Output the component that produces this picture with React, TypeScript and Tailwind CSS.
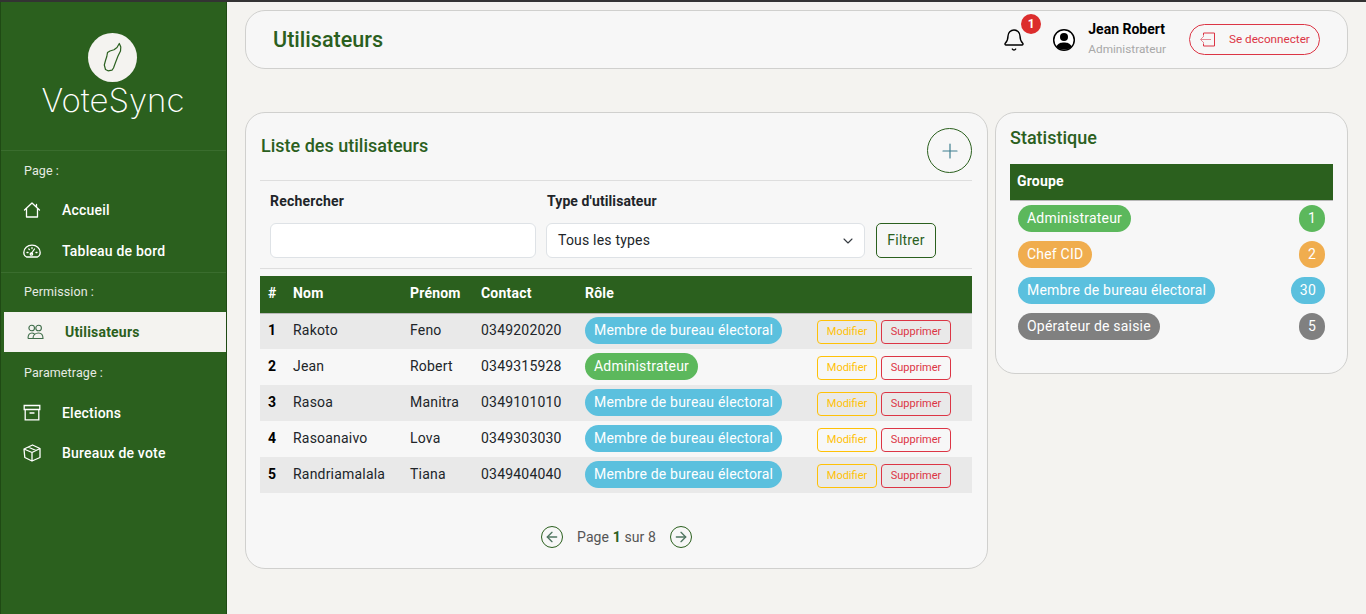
import React from "react";
import { Bell, Plus, ChevronDown, ArrowLeft, ArrowRight } from "lucide-react";

const BLUE = "bg-[#5bc0de]";
const rows = [
  ["1", "Rakoto", "Feno", "0349202020", "m"],
  ["2", "Jean", "Robert", "0349315928", "a"],
  ["3", "Rasoa", "Manitra", "0349101010", "m"],
  ["4", "Rasoanaivo", "Lova", "0349303030", "m"],
  ["5", "Randriamalala", "Tiana", "0349404040", "m"],
];

function HomeIcon() {
  return (
    <svg width="18" height="18" viewBox="0 0 18 18" fill="none" stroke="currentColor" strokeWidth="1.3" strokeLinejoin="round" strokeLinecap="round">
      <path d="M1.5 9 L9 2 L13.5 6.2 V3.5 M13.5 6.2 L16.5 9 M3.5 7.5 V16 H14.5 V7.5" />
    </svg>
  );
}
function GaugeIcon() {
  return (
    <svg width="18" height="18" viewBox="0 0 18 18" fill="none" stroke="currentColor" strokeWidth="1.3" strokeLinecap="round" strokeLinejoin="round">
      <path d="M3.5 15 C1.8 14.2 0.8 12.4 0.8 10.4 C0.8 6 4.5 3.2 9 3.2 C13.5 3.2 17.2 6 17.2 10.4 C17.2 12.4 16.2 14.2 14.5 15 Z" />
      <path d="M8 12 L11.5 7 M4 10.5 H5 M5.8 7 L6.4 7.6 M9 5.6 V6.5 M13 10.5 H14" />
      <circle cx="8.4" cy="12" r="1.2" />
    </svg>
  );
}
function UsersIcon() {
  return (
    <svg width="17" height="16" viewBox="0 0 17 16" fill="none" stroke="#3f6d4a" strokeWidth="1.1">
      <circle cx="4.7" cy="4" r="2.8" />
      <circle cx="11.6" cy="4" r="2.8" />
      <path d="M1 14.5 C1 11 2.8 9 5 9 C6.5 9 7.5 9.8 8 11 M7 14.5 H1 M6 14.5 C6 11 8.5 9 11.5 9 C14.2 9 16 11 16 14.5 Z" />
    </svg>
  );
}
function ArchiveIcon() {
  return (
    <svg width="18" height="18" viewBox="0 0 18 18" fill="none" stroke="currentColor" strokeWidth="1.3" strokeLinecap="round">
      <path d="M1.2 1.5 H16.8 V5.5 H1.2 Z M2.2 5.5 V15.8 H15.8 V5.5 M7 9 H11" />
    </svg>
  );
}
function BoxIcon() {
  return (
    <svg width="18" height="18" viewBox="0 0 18 18" fill="none" stroke="currentColor" strokeWidth="1.3" strokeLinejoin="round">
      <path d="M1 5 L9.5 1 L17 4.5 V13.5 L9 17 L1.8 13.5 Z M1 5 L9 8.5 L17 4.5 M9 8.5 V17 M5 3 L13 6.5" />
    </svg>
  );
}
function LogoutIcon() {
  return (
    <svg width="17" height="15" viewBox="0 0 17 15" fill="none" className="mr-[13px]">
      <path d="M4.5 1 H15.5 V14 H4.5 V11.5 M4.5 3.5 V1" stroke="#dc3545" strokeWidth="1" />
      <path d="M12 7.5 H1.5 M5 4 L1.5 7.5 L5 11" stroke="#e58a95" strokeWidth="1" />
    </svg>
  );
}

function NavItem({ icon, label, active, className = "h-[40px]" }: { icon: React.ReactNode; label: string; active?: boolean; className?: string }) {
  return active ? (
    <div className="ml-[3px] flex h-[40px] items-center bg-[#f4f3f0] pl-[23px] text-[14px] font-bold text-[#2b5f1c]">
      <span className="flex w-[38px]">{icon}</span>
      {label}
    </div>
  ) : (
    <div className={`flex items-center pl-[22px] text-[14px] font-medium text-white ${className}`}>
      <span className="flex w-[39px]">{icon}</span>
      {label}
    </div>
  );
}

function Section({ label, className = "h-[39px]" }: { label: string; className?: string }) {
  return <div className={`flex items-center pl-[23px] text-[12.5px] font-normal tracking-[0.1px] text-[#e6ebe3] ${className}`}>{label}</div>;
}

function Pill({ kind, children }: { kind: string; children: React.ReactNode }) {
  const bg = kind === "a" ? "bg-[#5cb85c]" : kind === "c" ? "bg-[#f0ad4e]" : kind === "o" ? "bg-[#808080]" : BLUE;
  return <span className={`inline-flex h-[27px] items-center rounded-full px-[9px] text-[14px] text-white ${bg}`}>{children}</span>;
}

function Count({ kind, children }: { kind: string; children: React.ReactNode }) {
  const bg = kind === "a" ? "bg-[#5cb85c]" : kind === "c" ? "bg-[#f0ad4e]" : kind === "o" ? "bg-[#808080]" : BLUE;
  return <span className={`inline-flex h-[27px] min-w-[26px] items-center justify-center rounded-full px-[9px] text-[14px] text-white ${bg}`}>{children}</span>;
}

function Madagascar() {
  return (
    <svg width="25" height="35" viewBox="100 40 25 35" fill="none" stroke="#2b6020" strokeWidth="1.2" strokeLinejoin="round">
      <path d="M119.3 43.5 L120.8 47 L120.5 51 L118 56 L115.5 62.5 L113.5 68 L112 70.2 L108 70.8 L105.5 69.5 L104.3 65 L105.5 60.5 L106.8 56.5 L107.5 52.5 L110 51 L114 49.8 L117 47.5 Z" />
    </svg>
  );
}

export default function App() {
  return (
    <div className="flex h-[614px] w-[1366px] overflow-hidden border-t-2 border-[#333333] bg-[#f4f3f0] font-['Roboto',sans-serif] tracking-[0.2px]">
      <aside className="h-full w-[227px] shrink-0 border-x border-[#1f4a14] bg-[#2b601e]">
        <div className="flex h-[149px] flex-col items-center border-b border-[#3a6d2e] pt-[31px]">
          <div className="flex h-[49px] w-[49px] -translate-x-[1px] items-center justify-center rounded-full bg-[#f4f3f0]">
            <Madagascar />
          </div>
          <div className="-mt-[2px] pr-[1px] font-['Inter',sans-serif] text-[33px] leading-[40px] font-extralight tracking-normal text-white">VoteSync</div>
        </div>
        <div className="h-[122px] border-b border-[#3a6d2e]">
          <Section label="Page :" className="h-[39px] pt-[2px]" />
          <NavItem label="Accueil" icon={<HomeIcon />} />
          <NavItem label="Tableau de bord" icon={<GaugeIcon />} className="h-[41px] pt-[1px]" />
        </div>
        <Section label="Permission :" />
        <NavItem active label="Utilisateurs" icon={<UsersIcon />} />
        <Section label="Parametrage :" className="h-[41px] pt-[2px]" />
        <NavItem label="Elections" icon={<ArchiveIcon />} />
        <NavItem label="Bureaux de vote" icon={<BoxIcon />} />
      </aside>

      <main className="min-w-0 flex-1 px-[18px] pt-[8px]">
        <header className="flex h-[59px] items-center rounded-[20px] border border-[#d0d0ce] bg-[#f7f7f7] pr-[27px] pl-[27px]">
          <h1 className="mt-[2px] text-[21.6px] font-medium tracking-normal text-[#2b601e]">Utilisateurs</h1>
          <div className="ml-auto flex items-center">
            <div className="relative mr-[26px] flex">
              <Bell size={24} strokeWidth={1.4} className="text-black" />
              <span className="absolute -top-[14px] left-[19px] flex h-[20px] w-[20px] items-center justify-center rounded-full bg-[#dc2d2d] text-[12px] font-bold tracking-normal text-white">1</span>
            </div>
            <svg width="24" height="24" viewBox="0 0 24 24" className="mr-[12px]">
              <circle cx="12" cy="12" r="10.3" fill="#fff" stroke="#000" strokeWidth="1.5" />
              <circle cx="12" cy="9" r="4" fill="#000" />
              <path d="M4.5 18.5 C6 15 9 14.5 12 14.5 C15 14.5 18 15 19.5 18.5 C17 22.5 7 22.5 4.5 18.5Z" fill="#000" />
            </svg>
            <div className="mr-[23px] flex flex-col">
              <span className="text-[14px] leading-[19px] font-bold tracking-normal text-black">Jean Robert</span>
              <span className="text-[11.8px] leading-[20px] tracking-normal text-[#a8a8a8]">Administrateur</span>
            </div>
            <button className="flex h-[31px] w-[131px] items-center rounded-full border border-[#dc3545] pl-[9px] text-[11.7px] tracking-normal text-[#dc3545]">
              <LogoutIcon />
              Se deconnecter
            </button>
          </div>
        </header>

        <div className="mt-[43px] flex gap-[7px]">
          <section className="h-[457px] w-[743px] shrink-0 rounded-[20px] border border-[#d0d0ce] bg-[#f7f7f7] pr-[15px] pl-[14px]">
            <div className="flex h-[68px] items-start justify-between border-b border-[#dedede] pt-[15px]">
              <h2 className="pt-[6px] pl-[1px] text-[18px] leading-[24px] font-medium tracking-normal text-[#2b601e]">Liste des utilisateurs</h2>
              <button className="flex h-[45px] w-[45px] items-center justify-center rounded-full border border-[#2b601e]">
                <Plus size={24} strokeWidth={1.2} className="text-[#3f7f8f]" />
              </button>
            </div>
            <div className="flex h-[88px] items-start border-b border-[#dedede] pl-[10px]">
              <div className="mr-[10px] w-[266px] pt-[10px]">
                <label className="block text-[14px] leading-[20px] font-bold text-[#212529]">Rechercher</label>
                <input className="mt-[12px] block h-[35px] w-full rounded-[6px] border border-[#dee2e6] bg-white" />
              </div>
              <div className="mr-[11px] w-[319px] pt-[10px]">
                <label className="block pl-[1px] text-[14px] leading-[20px] font-bold tracking-[0.1px] text-[#212529]">Type d'utilisateur</label>
                <div className="mt-[12px] flex h-[35px] w-full items-center justify-between rounded-[6px] border border-[#dee2e6] bg-white pr-[8px] pl-[11px] text-[14px] text-[#212529]">
                  Tous les types
                  <ChevronDown size={16} strokeWidth={1.6} className="text-[#343a40]" />
                </div>
              </div>
              <button className="mt-[42px] h-[35px] w-[60px] rounded-[5px] border border-[#2b601e] text-[14px] text-[#2b601e]">Filtrer</button>
            </div>
            <table className="mt-[7px] w-[712px] table-fixed border-collapse text-[14px] text-[#212529]">
              <colgroup>
                <col className="w-[25px]" />
                <col className="w-[117px]" />
                <col className="w-[71px]" />
                <col className="w-[104px]" />
                <col className="w-[232px]" />
                <col className="w-[163px]" />
              </colgroup>
              <thead>
                <tr className="h-[37px] border-b border-[#b8b8b8] bg-[#2b601e] text-left font-bold text-white">
                  <th className="pb-[1px] pl-[8px]">#</th>
                  <th className="pb-[1px] pl-[8px]">Nom</th>
                  <th className="pb-[1px] pl-[8px]">Prénom</th>
                  <th className="pb-[1px] pl-[8px]">Contact</th>
                  <th className="pb-[1px] pl-[8px]">Rôle</th>
                  <th />
                </tr>
              </thead>
              <tbody>
                {rows.map((r, i) => (
                  <tr key={r[0]} className={`h-[36px] ${i % 2 === 0 ? "bg-[#e9e9e9]" : "bg-[#f7f7f7]"}`}>
                    <td className="pb-[2px] pl-[8px] font-bold text-black">{r[0]}</td>
                    <td className="pb-[2px] pl-[8px]">{r[1]}</td>
                    <td className="pb-[2px] pl-[8px]">{r[2]}</td>
                    <td className="pb-[2px] pl-[8px]">{r[3]}</td>
                    <td className="pb-[2px] pl-[8px]">
                      <Pill kind={r[4]}>{r[4] === "a" ? "Administrateur" : "Membre de bureau électoral"}</Pill>
                    </td>
                    <td className="pl-[8px]">
                      <div className="flex gap-[4px] pt-[2px] tracking-normal">
                        <span className="flex h-[24px] w-[60px] items-center justify-center rounded-[4px] border border-[#ffc107] text-[11px] text-[#ffc107]">Modifier</span>
                        <span className="flex h-[24px] w-[70px] items-center justify-center rounded-[4px] border border-[#dc3545] text-[11px] text-[#dc3545]">Supprimer</span>
                      </div>
                    </td>
                  </tr>
                ))}
              </tbody>
            </table>
            <div className="mt-[33px] flex items-center justify-center pl-[1px] text-[14px] tracking-[0.1px] text-[#555555]">
              <span className="flex h-[22px] w-[22px] items-center justify-center rounded-full border-[1.5px] border-[#2b601e]">
                <ArrowLeft size={16} strokeWidth={2} className="text-[#4f7560]" />
              </span>
              <span className="mx-[14px]">Page <b className="text-[#2b601e]">1</b> sur 8</span>
              <span className="flex h-[22px] w-[22px] items-center justify-center rounded-full border-[1.5px] border-[#2b601e]">
                <ArrowRight size={16} strokeWidth={2} className="text-[#4f7560]" />
              </span>
            </div>
          </section>

          <section className="h-[262px] flex-1 rounded-[20px] border border-[#d0d0ce] bg-[#f7f7f7] px-[14px]">
            <h2 className="pt-[14px] text-[18px] leading-[22px] font-medium tracking-normal text-[#2b601e]">Statistique</h2>
            <div className="mt-[15px] flex h-[37px] items-center border-b border-[#b8b8b8] bg-[#2b601e] pb-[2px] pl-[7px] text-[14px] font-bold text-white">Groupe</div>
            <div className="flex flex-col gap-[9px] px-[8px] pt-[4px]">
              {[
                ["a", "Administrateur", "1"],
                ["c", "Chef CID", "2"],
                ["m", "Membre de bureau électoral", "30"],
                ["o", "Opérateur de saisie", "5"],
              ].map(([k, l, n]) => (
                <div key={l} className="flex items-center justify-between">
                  <Pill kind={k}>{l}</Pill>
                  <Count kind={k}>{n}</Count>
                </div>
              ))}
            </div>
          </section>
        </div>
      </main>
    </div>
  );
}
